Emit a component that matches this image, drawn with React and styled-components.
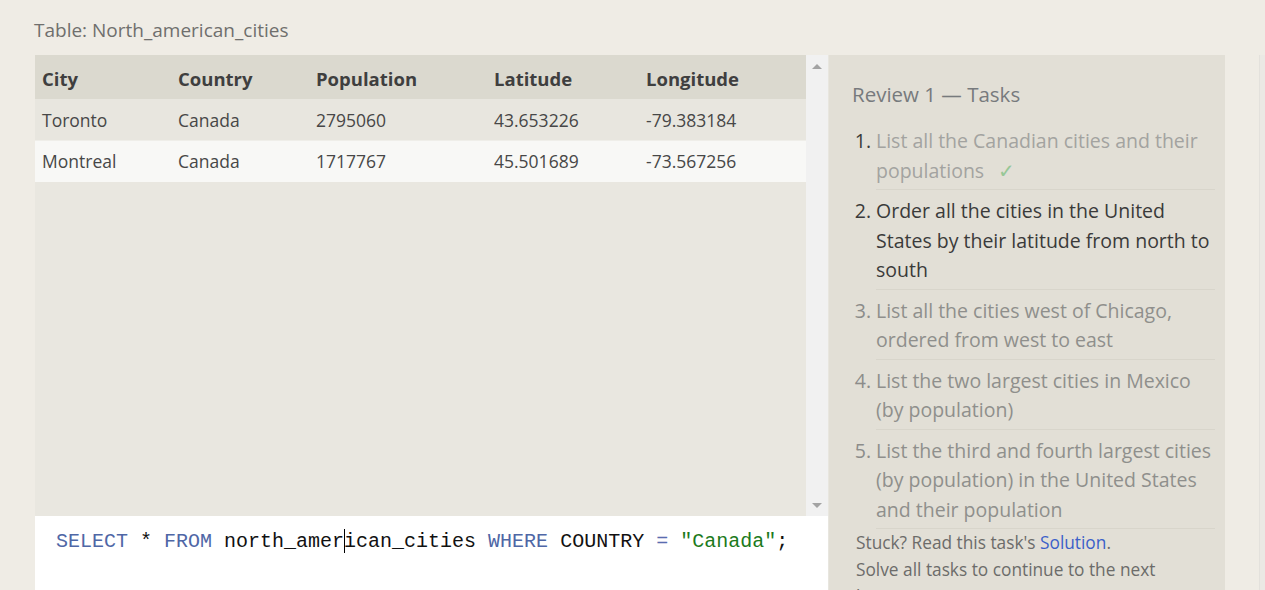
import styled, { createGlobalStyle } from "styled-components";

const GlobalStyle = createGlobalStyle`
  html, body {
    margin: 0;
    padding: 0;
    background: #efece5;
    overflow: hidden;
  }
  body {
    font-family: "Open Sans", "Noto Sans", sans-serif;
  }
`;

const columns = [
  { key: "city", label: "City", width: 136 },
  { key: "country", label: "Country", width: 138 },
  { key: "population", label: "Population", width: 178 },
  { key: "latitude", label: "Latitude", width: 152 },
  { key: "longitude", label: "Longitude", width: 167 },
];

const rows = [
  { id: 1, city: "Toronto", country: "Canada", population: "2795060", latitude: "43.653226", longitude: "-79.383184" },
  { id: 2, city: "Montreal", country: "Canada", population: "1717767", latitude: "45.501689", longitude: "-73.567256" },
];

const tasks = [
  { id: 1, text: "List all the Canadian cities and their populations", state: "done" },
  { id: 2, text: "Order all the cities in the United States by their latitude from north to south", state: "active" },
  { id: 3, text: "List all the cities west of Chicago, ordered from west to east", state: "todo" },
  { id: 4, text: "List the two largest cities in Mexico (by population)", state: "todo" },
  { id: 5, text: "List the third and fourth largest cities (by population) in the United States and their population", state: "todo" },
];

const App = () => {
  return (
    <Page>
      <GlobalStyle />
      <Title>Table: North_american_cities</Title>
      <Workspace>
        <LeftColumn>
          <TableArea>
            <TableScroll>
              <DataTable>
                <colgroup>
                  {columns.map(({ key, width }) => (
                    <col key={key} style={{ width }} />
                  ))}
                </colgroup>
                <thead>
                  <tr>
                    {columns.map(({ key, label }) => (
                      <HeadCell key={key}>{label}</HeadCell>
                    ))}
                  </tr>
                </thead>
                <tbody>
                  {rows.map((row, i) => (
                    <BodyRow key={row.id} $odd={i % 2 === 1}>
                      {columns.map(({ key }) => (
                        <Cell key={key}>{row[key]}</Cell>
                      ))}
                    </BodyRow>
                  ))}
                </tbody>
              </DataTable>
            </TableScroll>
            <ScrollBar>
              <Arrow $dir="up" />
              <Arrow $dir="down" />
            </ScrollBar>
          </TableArea>
          <Editor>
            <Code>
              <Kw>SELECT</Kw> * <Kw>FROM</Kw> north_amer
              <Caret />
              ican_cities <Kw>WHERE</Kw> COUNTRY <Op>=</Op> <Str>"Canada"</Str>;
            </Code>
          </Editor>
        </LeftColumn>
        <TaskPanel>
          <PanelTitle>Review 1 — Tasks</PanelTitle>
          <TaskList>
            {tasks.map(({ id, text, state }) => (
              <TaskItem key={id}>
                <Num $state={state}>{id}.</Num>
                <TaskBody $state={state}>
                  {text}
                  {state === "done" && <Check>✓</Check>}
                </TaskBody>
              </TaskItem>
            ))}
          </TaskList>
          <Hints>
            <Hint>
              Stuck? Read this task's <SolutionLink href="#">Solution</SolutionLink>.
            </Hint>
            <Hint>Solve all tasks to continue to the next lesson.</Hint>
          </Hints>
        </TaskPanel>
        <PageEdge />
      </Workspace>
    </Page>
  );
};

export default App;

const Page = styled.div`
  height: 590px;
  display: flex;
  flex-direction: column;
`;

const Title = styled.h2`
  margin: 0;
  padding: 17px 0 0 34px;
  height: 38px;
  box-sizing: border-box;
  font-size: 19px;
  font-weight: 400;
  line-height: 26px;
  color: #6f6f6d;
`;

const Workspace = styled.div`
  flex: 1;
  display: grid;
  grid-template-columns: 35px 793px 397px 1fr;
  padding-top: 17px;
  min-height: 0;

  &::before {
    content: "";
  }
`;

const LeftColumn = styled.div`
  display: flex;
  flex-direction: column;
  min-height: 0;
`;

const TableArea = styled.div`
  height: 461px;
  display: flex;
  background: #e9e7e0;
`;

const TableScroll = styled.div`
  width: 771px;
  overflow: hidden;
`;

const DataTable = styled.table`
  width: 771px;
  border-collapse: collapse;
  table-layout: fixed;
  color: #454545;
`;

const HeadCell = styled.th`
  height: 40px;
  padding: 3px 7px 0;
  text-align: left;
  font-size: 18.5px;
  font-weight: 700;
  background: #dbd9cf;
  color: #3f3f3f;
`;

const BodyRow = styled.tr`
  background: ${({ $odd }) => ($odd ? "#f8f8f6" : "#e8e6df")};
  height: ${({ $odd }) => ($odd ? "41px" : "42px")};
  border-top: 1px solid ${({ $odd }) => ($odd ? "#efeee9" : "transparent")};
`;

const Cell = styled.td`
  padding: 0 7px;
  font-size: 17.5px;
  color: #474747;
`;

const ScrollBar = styled.div`
  width: 22px;
  background: #f1f1f1;
  display: flex;
  flex-direction: column;
  justify-content: space-between;
  align-items: center;
  padding: 9px 0 8px;
  box-sizing: border-box;
`;

const Arrow = styled.span`
  width: 0;
  height: 0;
  border-left: 5px solid transparent;
  border-right: 5px solid transparent;
  ${({ $dir }) =>
    $dir === "up"
      ? "border-bottom: 5px solid #a3a3a3;"
      : "border-top: 5px solid #a3a3a3;"}
`;

const Editor = styled.div`
  flex: 1;
  background: #ffffff;
  padding: 13px 0 0 21px;
`;

const Code = styled.pre`
  margin: 0;
  font-family: "Liberation Mono", "DejaVu Sans Mono", monospace;
  font-size: 20px;
  line-height: 26px;
  color: #111111;
  white-space: pre;
`;

const Kw = styled.span`
  color: #4f67a6;
`;

const Op = styled.span`
  color: #5a6db0;
`;

const Str = styled.span`
  color: #1c7a1c;
`;

const Caret = styled.span`
  display: inline-block;
  width: 1px;
  height: 24px;
  margin-right: -1px;
  background: #000;
  vertical-align: -6px;
`;

const TaskPanel = styled.aside`
  grid-column: 3;
  background: #e2dfd6;
  padding: 24px 10px 0 23px;
  border-left: 1px solid #e8e6df;
  box-sizing: border-box;
  overflow: hidden;
`;

const PanelTitle = styled.h3`
  margin: 0 0 11px;
  font-size: 20.5px;
  font-weight: 400;
  line-height: 30px;
  color: #777a7d;
`;

const TaskList = styled.ol`
  list-style: none;
  margin: 0;
  padding: 0;
`;

const TaskItem = styled.li`
  display: flex;
  font-size: 19.5px;
  line-height: 29.5px;
`;

const Num = styled.span`
  width: 24px;
  flex: none;
  padding: 6px 5px 0 0;
  box-sizing: border-box;
  text-align: right;
  white-space: nowrap;
  color: ${({ $state }) => ($state === "todo" ? "#8c8c8a" : "#3a3a3a")};
`;

const TaskBody = styled.div`
  flex: 1;
  padding: 6px 0 4px;
  border-bottom: 1px solid #d8d5cb;
  color: ${({ $state }) =>
    $state === "active" ? "#3a3a3a" : $state === "done" ? "#a3a3a0" : "#8f8f8c"};
`;

const Check = styled.span`
  display: inline-block;
  margin-left: 14px;
  color: #97c797;
`;

const Hints = styled.div`
  padding: 0 40px 0 4px;
`;

const Hint = styled.p`
  margin: 0;
  font-size: 17.3px;
  line-height: 27px;
  color: #6c6c6a;
`;

const SolutionLink = styled.a`
  color: #3b5fc9;
  text-decoration: none;
`;

const PageEdge = styled.div`
  grid-column: 4;
  margin-left: 34px;
  border-left: 1px solid #e3e1dc;
  background: #ebe9e4;
`;
